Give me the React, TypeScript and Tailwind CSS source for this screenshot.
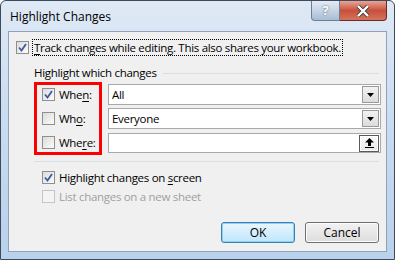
import React from 'react';

const font = { fontFamily: '"Open Sans", "Noto Sans", sans-serif' };

function Check({ checked, disabled }: { checked?: boolean; disabled?: boolean }) {
  return (
    <div
      className={`w-[13px] h-[13px] shrink-0 border ${disabled ? 'border-[#c5c5c5] bg-[#f4f4f4]' : 'border-[#8e8f8f] bg-gradient-to-br from-[#dcdcdc] to-[#fbfbfb]'} flex items-center justify-center`}
    >
      {checked && (
        <svg width="9" height="9" viewBox="0 0 9 9">
          <path d="M1 4.5 L3.5 7.5 L8 1" fill="none" stroke="#3e5aa0" strokeWidth="1.8" />
        </svg>
      )}
    </div>
  );
}

function U({ children }: { children: React.ReactNode }) {
  return <span className="underline underline-offset-2">{children}</span>;
}

function Combo({ value }: { value: string }) {
  return (
    <div className="h-[21px] flex items-center border border-[#a9a9a9] bg-white pl-[3px] pr-[1px]">
      <span className="flex-1">{value}</span>
      <div className="w-[17px] h-[17px] border border-[#9a9a9a] bg-gradient-to-b from-[#f2f2f2] to-[#dcdcdc] flex items-center justify-center">
        <svg width="7" height="4" viewBox="0 0 7 4">
          <path d="M0 0 H7 L3.5 4 Z" fill="#000" />
        </svg>
      </div>
    </div>
  );
}

export default function App() {
  return (
    <div
      className="w-[395px] h-[260px] rounded-t-[6px] border border-[#3b4a5c] bg-gradient-to-b from-[#dfe9f5] via-[#c8dbf0] to-[#b9d1ea] flex flex-col overflow-hidden"
      style={font}
    >
      {/* Title bar */}
      <div className="h-[30px] flex items-start">
        <span className="pl-[9px] pt-[7px] text-[12px] text-black">Highlight Changes</span>
        <div className="ml-auto mr-[7px] flex">
          <div className="w-[29px] h-[20px] rounded-bl-[4px] border border-[#6d7f94] border-t-0 bg-gradient-to-b from-[#e4ecf5] to-[#a9bdd3] flex items-center justify-center text-[13px] font-bold text-white [text-shadow:0_0_2px_#44556b]">
            ?
          </div>
          <div className="w-[47px] h-[20px] rounded-br-[4px] border border-[#6b2a24] border-t-0 border-l-0 bg-gradient-to-b from-[#e7a597] via-[#c8503a] to-[#d4735c] flex items-center justify-center">
            <svg width="14" height="12" viewBox="0 0 14 12">
              <path d="M2 1 L12 11 M12 1 L2 11" stroke="#3a3a3a" strokeWidth="4" />
              <path d="M2 1 L12 11 M12 1 L2 11" stroke="#fff" strokeWidth="2.4" />
            </svg>
          </div>
        </div>
      </div>

      {/* Client area */}
      <div className="flex-1 ml-[7px] mr-[7px] mb-[7px] border border-[#8ea3bb] bg-[#f0f0f0] text-[11.5px] tracking-[-0.3px] text-black flex flex-col pl-[7px] pr-[5px]">
        <div className="mt-[7px] flex items-center gap-[3px]">
          <Check checked />
          <span className="border border-dotted border-black px-[1px] leading-[15px]">
            <U>T</U>rack changes while editing. This also shares your workbook.
          </span>
        </div>

        <div className="mt-[9px] ml-[18px] mr-[2px] flex items-center gap-[6px]">
          <span className="leading-[16px]">Highlight which changes</span>
          <div className="flex-1 h-px bg-[#d5dfe5]" />
        </div>

        <div className="ml-[18px] mt-[1px] flex gap-[6px]">
          <div className="w-[68px] h-[73px] border-[3px] border-[#ff0000] flex flex-col gap-[4px] pl-[5px]">
            <div className="h-[20px] flex items-center gap-[4px]">
              <Check checked />
              <span>Whe<U>n</U>:</span>
            </div>
            <div className="h-[20px] flex items-center gap-[4px]">
              <Check />
              <span>Wh<U>o</U>:</span>
            </div>
            <div className="h-[20px] flex items-center gap-[4px]">
              <Check />
              <span>Whe<U>r</U>e:</span>
            </div>
          </div>
          <div className="flex-1 flex flex-col gap-[3px] pt-[2px]">
            <Combo value="All" />
            <Combo value="Everyone" />
            <div className="mt-[1px] h-[20px] flex items-center border border-[#a9a9a9] bg-white pr-[1px] justify-end">
              <div className="w-[20px] h-[17px] border border-[#5a5a5a] shadow-[inset_0_0_0_1px_#ffffff] bg-gradient-to-b from-[#fafafa] to-[#e8e8e8] flex items-center justify-center">
                <svg width="9" height="10" viewBox="0 0 9 10">
                  <path d="M4.5 0 L9 4.5 H6 V8 H3 V4.5 H0 Z" fill="#000" />
                  <rect x="0" y="9" width="9" height="1" fill="#000" />
                </svg>
              </div>
            </div>
          </div>
        </div>

        <div className="mt-[6px] ml-[18px] mr-[2px] h-px bg-[#d5dfe5]" />

        <div className="mt-[8px] ml-[26px] h-[15px] flex items-center gap-[4px]">
          <Check checked />
          <span>Highlight changes on <U>s</U>creen</span>
        </div>
        <div className="mt-[4px] ml-[26px] h-[15px] flex items-center gap-[4px] text-[#a0a0a0]">
          <Check disabled />
          <span>List changes on a new sheet</span>
        </div>

        <div className="mt-auto mb-[8px] mr-[2px] flex justify-end gap-[10px] tracking-normal">
          <button className="w-[74px] h-[21px] rounded-[3px] border border-[#3c7fb1] bg-gradient-to-b from-[#eaf6fd] to-[#bee6fd] shadow-[inset_0_0_0_1px_#8fd0f5] text-[12px]">
            OK
          </button>
          <button className="w-[74px] h-[21px] rounded-[3px] border border-[#707070] bg-gradient-to-b from-[#f2f2f2] to-[#dddddd] shadow-[inset_0_0_0_1px_#fcfcfc] text-[12px]">
            Cancel
          </button>
        </div>
      </div>
    </div>
  );
}
